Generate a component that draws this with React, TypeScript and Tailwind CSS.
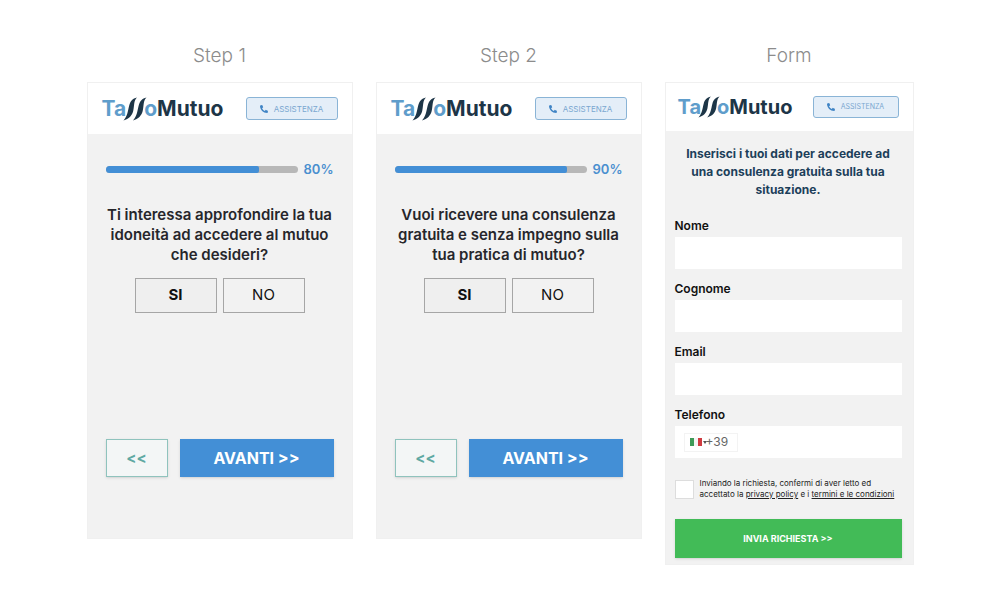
import { useState } from 'react';
import type { ReactNode } from 'react';
import { FaPhoneAlt } from 'react-icons/fa';

function Logo({ small = false }: { small?: boolean }) {
  return (
    <div className={`flex items-center font-bold leading-6 ${small ? 'text-[20px]' : 'text-[21px]'}`}>
      <span className="text-[#5f9dcb]">Ta</span>
      <svg viewBox="0 0 24 24" className={`relative -mx-[3px] shrink-0 ${small ? 'size-[22px]' : 'size-6'}`} aria-label="ss">
        <path d="M14 0.500C9.500 1.500 7.400 4 6.200 8.500C4.800 14 4.500 19 0.500 23.500C6 22 9 18.500 10.200 14C11.500 8.500 10.500 4 14 0.500Z" fill="#1d3547" />
        <path d="M23.500 0.500C19 1.500 16.900 4 15.700 8.500C14.300 14 14 19 10 23.500C15.500 22 18.500 18.500 19.700 14C21 8.500 20 4 23.500 0.500Z" fill="#1d3547" />
      </svg>
      <span className="text-[#5f9dcb]">o</span>
      <span className="text-[#1d3547]">Mutuo</span>
    </div>
  );
}

function Header({ small = false }: { small?: boolean }) {
  return (
    <header className={`flex items-center justify-between bg-white ${small ? 'h-12 pr-3.5 pl-3' : 'h-[51px] px-3.5'}`}>
      <Logo small={small} />
      <button
        type="button"
        className={`flex items-center justify-center gap-1.5 rounded-[3px] border border-[#8ab4d6] bg-[#e4eef8] text-[#7aa7d0] ${
          small ? 'h-[22px] w-[86px] text-[7px]' : 'h-[23px] w-[92px] text-[8px]'
        }`}
      >
        <FaPhoneAlt className="size-2 text-[#3f84c5]" />
        ASSISTENZA
      </button>
    </header>
  );
}

function Column({ title, children }: { title: string; children: ReactNode }) {
  return (
    <section>
      <h2 className="mb-3 text-center text-[19px] leading-7 font-light text-[#8c8c8c]">{title}</h2>
      <div className="border border-[#f0f0f0] bg-[#f2f2f2]">{children}</div>
    </section>
  );
}

function StepCard({ percent, question }: { percent: number; question: string[] }) {
  const [answer, setAnswer] = useState('SI');

  return (
    <>
      <Header />
      <div className="px-[18px] pt-[25px] pb-[61px]">
        <div className="flex items-center gap-1.5">
          <div className="h-[7px] flex-1 overflow-hidden rounded-full bg-[#b8b8b8]">
            <div className="h-full rounded-r-xs bg-[#438fd6]" style={{ width: `${percent}%` }} />
          </div>
          <span className="text-[13px] leading-5 font-semibold text-[#4a8fcf]">{percent}%</span>
        </div>

        <h3 className="mt-[26px] text-center text-[15px] leading-5 font-semibold whitespace-nowrap text-[#26262b]">
          {question.map((line) => (
            <span key={line} className="block">{line}</span>
          ))}
        </h3>

        <div className="mt-[13px] flex justify-center gap-1.5">
          {['SI', 'NO'].map((option) => (
            <button
              key={option}
              type="button"
              onClick={() => setAnswer(option)}
              className={`h-[35px] w-[82px] border border-[#a6a6a6] text-[15px] text-[#111111] ${
                answer === option ? 'bg-[#efefef] font-bold' : 'font-normal'
              }`}
            >
              {option}
            </button>
          ))}
        </div>

        <div className="mt-[126px] flex gap-3">
          <button
            type="button"
            aria-label="Indietro"
            className="h-[38px] w-[62px] border border-[#8fc3bd] bg-[#f3f6f6] text-[15px] font-bold text-[#5fa9a3] shadow-sm"
          >
            &lt;&lt;
          </button>
          <button type="button" className="h-[38px] flex-1 bg-[#438fd6] text-[16px] font-bold text-white shadow-sm">
            AVANTI &gt;&gt;
          </button>
        </div>
      </div>
    </>
  );
}

function Field({ id, label, type = 'text' }: { id: string; label: string; type?: string }) {
  return (
    <div>
      <label htmlFor={id} className="mb-[3px] block text-[12px] leading-4 font-semibold text-[#111111]">
        {label}
      </label>
      <input id={id} type={type} className="block h-8 w-full bg-white px-2 text-xs outline-none" />
    </div>
  );
}

function ContactForm() {
  return (
    <>
      <Header small />
      <form className="pt-[14px] pr-[11px] pb-1.5 pl-[9px]" onSubmit={(e) => e.preventDefault()}>
        <h3 className="mb-[19px] text-center text-[12px] leading-[18px] font-bold whitespace-nowrap text-[#1d3f5a]">
          <span className="block">Inserisci i tuoi dati per accedere ad</span>
          <span className="block">una consulenza gratuita sulla tua</span>
          <span className="block">situazione.</span>
        </h3>

        <div className="flex flex-col gap-3">
          <Field id="nome" label="Nome" />
          <Field id="cognome" label="Cognome" />
          <Field id="email" label="Email" type="email" />
          <div>
            <label htmlFor="telefono" className="mb-[3px] block text-[12px] leading-4 font-semibold text-[#111111]">
              Telefono
            </label>
            <div className="flex h-8 items-center bg-white pl-[9px]">
              <div className="flex h-[19px] w-[54px] shrink-0 items-center border border-[#f3f3f3] pl-[5px]">
                <svg viewBox="0 0 12 8" className="h-2 w-3 shrink-0">
                  <path d="M0 0h4v8H0z" fill="#3d9a57" />
                  <path d="M4 0h4v8H4z" fill="#f4f4f4" />
                  <path d="M8 0h4v8H8z" fill="#cf3b40" />
                </svg>
                <svg viewBox="0 0 4 3" className="ml-px h-[3px] w-1 shrink-0">
                  <path d="M0 0h4L2 3z" fill="#555555" />
                </svg>
                <select aria-label="Prefisso" className="-ml-px w-7 appearance-none bg-transparent text-[12px] leading-4 text-[#666666]">
                  <option>+39</option>
                </select>
              </div>
              <input id="telefono" type="tel" className="h-8 min-w-0 flex-1 bg-transparent px-2 text-xs outline-none" />
            </div>
          </div>
        </div>

        <div className="mt-5 flex items-center gap-1.5">
          <input
            id="consenso"
            type="checkbox"
            className="size-[19px] shrink-0 appearance-none border border-[#dddddd] bg-white checked:bg-[#438fd6]"
          />
          <label htmlFor="consenso" className="text-[8px] leading-[11px] whitespace-nowrap text-[#222222]">
            Inviando la richiesta, confermi di aver letto ed
            <br />
            accettato la <a href="#privacy" className="underline">privacy policy</a> e i{' '}
            <a href="#termini" className="underline">termini e le condizioni</a>
          </label>
        </div>

        <button type="submit" className="mt-[19px] block h-[39px] w-full bg-[#42bb57] text-[9px] font-bold text-white shadow-sm">
          INVIA RICHIESTA &gt;&gt;
        </button>
      </form>
    </>
  );
}

export default function App() {
  return (
    <main className="min-h-screen bg-white px-6 pt-[42px] pb-8 font-['Inter','Liberation_Sans',sans-serif]">
      <div className="mx-auto grid max-w-[827px] items-start gap-x-[23px] gap-y-8 md:grid-cols-[minmax(0,266fr)_minmax(0,266fr)_minmax(0,249fr)]">
        <Column title="Step 1">
          <StepCard percent={80} question={['Ti interessa approfondire la tua', 'idoneità ad accedere al mutuo', 'che desideri?']} />
        </Column>
        <Column title="Step 2">
          <StepCard percent={90} question={['Vuoi ricevere una consulenza', 'gratuita e senza impegno sulla', 'tua pratica di mutuo?']} />
        </Column>
        <Column title="Form">
          <ContactForm />
        </Column>
      </div>
    </main>
  );
}
